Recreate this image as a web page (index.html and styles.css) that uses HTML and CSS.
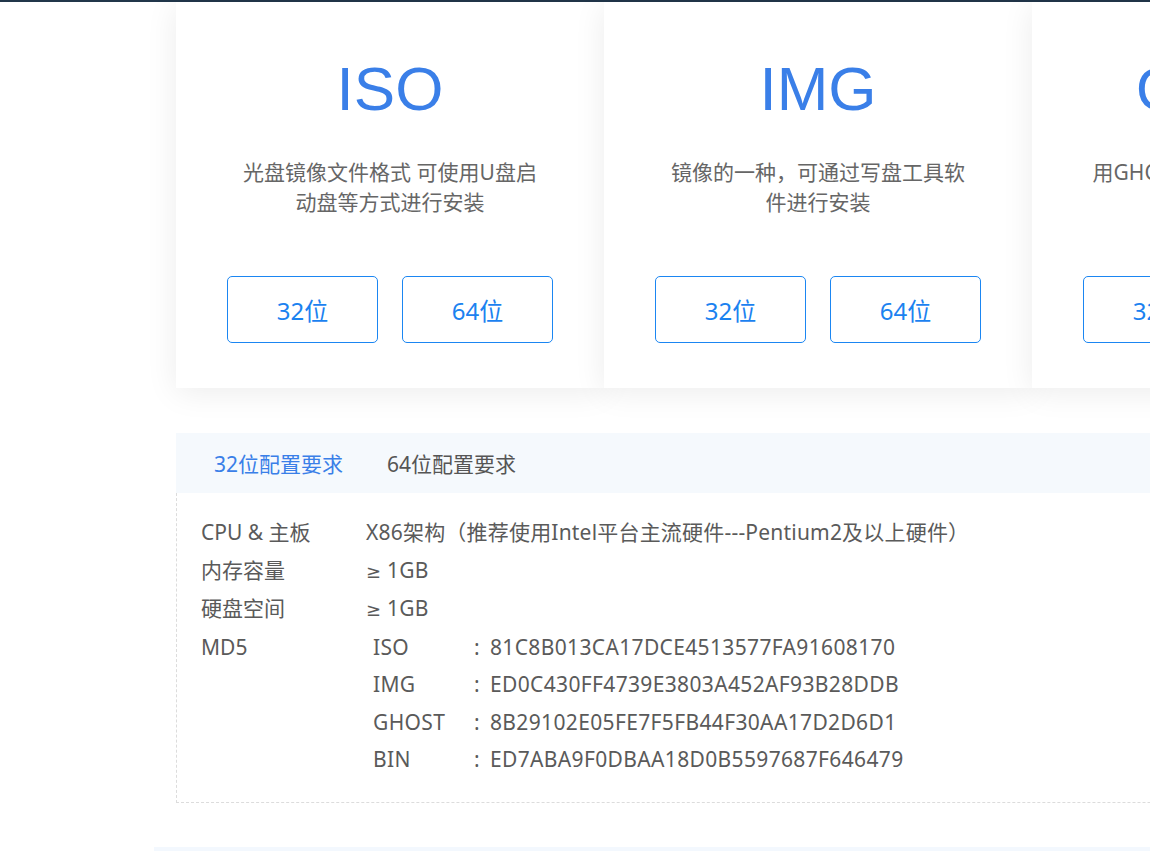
FILE: index.html
```html
<!DOCTYPE html>
<html lang="zh-CN">
<head>
  <meta charset="UTF-8">
  <meta name="viewport" content="width=device-width, initial-scale=1.0">
  <title>系统镜像下载</title>
  <link rel="stylesheet" href="styles.css">
</head>
<body>

  <div class="topline"></div>

  <div class="main">
    <!-- 镜像格式卡片 -->
    <div class="cards">
      <div class="card">
        <h2 class="card-title">ISO</h2>
        <p class="card-desc">光盘镜像文件格式 可使用U盘启动盘等方式进行安装</p>
        <div class="card-btns">
          <a class="btn" href="#">32位</a>
          <a class="btn" href="#">64位</a>
        </div>
      </div>
      <div class="card">
        <h2 class="card-title">IMG</h2>
        <p class="card-desc">镜像的一种，可通过写盘工具软件进行安装</p>
        <div class="card-btns">
          <a class="btn" href="#">32位</a>
          <a class="btn" href="#">64位</a>
        </div>
      </div>
      <div class="card">
        <h2 class="card-title">GHOST</h2>
        <p class="card-desc">用GHOST 一键还原软件快速安装的镜像格式</p>
        <div class="card-btns">
          <a class="btn" href="#">32位</a>
          <a class="btn" href="#">64位</a>
        </div>
      </div>
    </div>

    <!-- 配置要求 -->
    <div class="config">
      <div class="tabs">
        <span class="tab active">32位配置要求</span>
        <span class="tab">64位配置要求</span>
      </div>
      <div class="spec">
        <div class="row">
          <span class="label">CPU &amp; 主板</span>
          <span class="value">X86架构（推荐使用Intel平台主流硬件---Pentium2及以上硬件）</span>
        </div>
        <div class="row">
          <span class="label">内存容量</span>
          <span class="value"><span class="ge">≥</span> 1GB</span>
        </div>
        <div class="row">
          <span class="label">硬盘空间</span>
          <span class="value"><span class="ge">≥</span> 1GB</span>
        </div>
        <div class="row">
          <span class="label">MD5</span>
          <div class="md5">
            <span>ISO</span><span>:</span><span>81C8B013CA17DCE4513577FA91608170</span>
            <span>IMG</span><span>:</span><span>ED0C430FF4739E3803A452AF93B28DDB</span>
            <span>GHOST</span><span>:</span><span>8B29102E05FE7F5FB44F30AA17D2D6D1</span>
            <span>BIN</span><span>:</span><span>ED7ABA9F0DBAA18D0B5597687F646479</span>
          </div>
        </div>
      </div>
    </div>
  </div>

  <div class="next"></div>

</body>
</html>
```

FILE: styles.css
```css
* {
  box-sizing: border-box;
  margin: 0;
  padding: 0;
}
body {
  font-family: "Noto Sans", "Noto Sans CJK SC", sans-serif;
  background-color: #fff;
  color: #5a5a5a;
  overflow: hidden;
  width: 1150px;
  height: 851px;
}
.topline {
  height: 2px;
  background-color: #21364a;
}
.main {
  margin-left: 176px;
  width: 1290px;
}
.cards {
  display: flex;
}
.card {
  width: 428px;
  flex-shrink: 0;
  background-color: #fff;
  box-shadow: 0 4px 30px rgba(0, 0, 0, 0.08);
  padding: 51px 0 45px;
  text-align: center;
}
.card-title {
  font-family: "Liberation Sans", Arial, sans-serif;
  font-weight: normal;
  font-size: 62px;
  line-height: 72px;
  color: #3a7fe8;
}
.card-desc {
  width: 310px;
  height: 90px;
  margin: 32px auto 29px;
  font-size: 21px;
  line-height: 30px;
  color: #666;
}
.card-btns {
  display: flex;
  justify-content: center;
  gap: 24px;
}
.btn {
  display: flex;
  justify-content: center;
  align-items: center;
  width: 151px;
  height: 67px;
  border: 1px solid #1b86f2;
  border-radius: 5px;
  font-size: 24px;
  color: #1b82f0;
  text-decoration: none;
}
.config {
  margin-top: 45px;
}
.tabs {
  display: flex;
  gap: 44px;
  height: 60px;
  align-items: center;
  padding-left: 38px;
  background-color: #f5f9fd;
}
.tab {
  font-size: 21px;
  color: #555;
  cursor: pointer;
}
.tab.active {
  color: #3a7fe8;
}
.spec {
  border: 1px dashed #dcdcdc;
  border-top: none;
  padding: 21px 0 23px 24px;
  font-size: 21px;
}
.row {
  display: flex;
  line-height: 37.5px;
}
.label {
  width: 165px;
  flex-shrink: 0;
}
.value {
  letter-spacing: 0.2px;
}
.ge {
  font-family: "DejaVu Sans", sans-serif;
  font-size: 18px;
}
.md5 {
  display: grid;
  grid-template-columns: 101px 16px auto;
  margin-left: 7px;
  letter-spacing: 0.35px;
}
.next {
  margin: 44px 0 0 154px;
  height: 10px;
  background-color: #f3f8fe;
}
```
